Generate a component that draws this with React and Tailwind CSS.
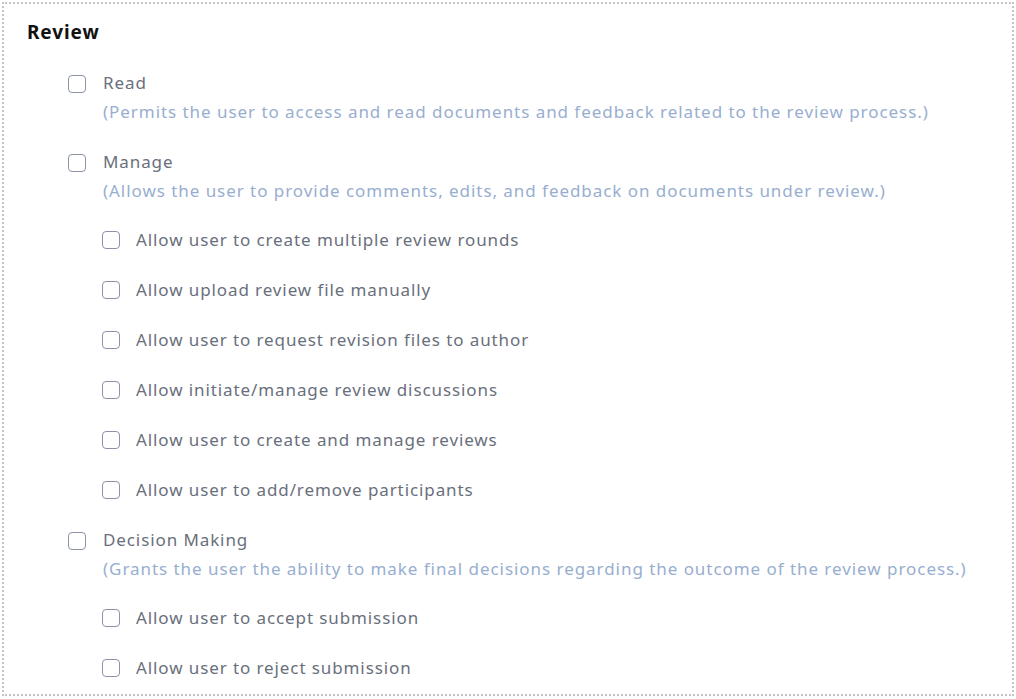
import React from "react";

const sections = [
  {
    label: "Read",
    desc: "(Permits the user to access and read documents and feedback related to the review process.)",
    children: [],
  },
  {
    label: "Manage",
    desc: "(Allows the user to provide comments, edits, and feedback on documents under review.)",
    children: [
      "Allow user to create multiple review rounds",
      "Allow upload review file manually",
      "Allow user to request revision files to author",
      "Allow initiate/manage review discussions",
      "Allow user to create and manage reviews",
      "Allow user to add/remove participants",
    ],
  },
  {
    label: "Decision Making",
    desc: "(Grants the user the ability to make final decisions regarding the outcome of the review process.)",
    children: ["Allow user to accept submission", "Allow user to reject submission"],
  },
];

function Box() {
  return (
    <input
      type="checkbox"
      className="h-[18px] w-[18px] shrink-0 appearance-none rounded-[4px] border-[1.5px] border-[#8c93a6] bg-white"
    />
  );
}

export default function App() {
  return (
    <div className="h-[699px] w-[1016px] bg-white p-[2px] font-['Noto_Sans',sans-serif]">
      <div className="h-[694px] border-2 border-dotted border-[#c4c4c4] pl-[23px] pt-[15px]">
        <h2 className="text-[19px] font-bold leading-[26px] tracking-[0.9px] text-[#111]">Review</h2>
        <div className="mt-[28px] flex flex-col gap-[30px] pl-[41px]">
          {sections.map((s) => (
            <div key={s.label}>
              <label className="flex items-start gap-[17px]">
                <div className="pt-[2px]">
                  <Box />
                </div>
                <div>
                  <div className="text-[17px] leading-[20px] tracking-[0.9px] text-[#6a6f7c]">{s.label}</div>
                  <div className="mt-[9px] text-[17px] leading-[20px] tracking-[0.95px] text-[#98aed0]">
                    {s.desc}
                  </div>
                </div>
              </label>
              {s.children.length > 0 && (
                <div className="mt-[29px] flex flex-col gap-[30px] pl-[34px]">
                  {s.children.map((c) => (
                    <label key={c} className="flex items-center gap-[16px]">
                      <Box />
                      <span className="text-[17px] leading-[20px] tracking-[0.9px] text-[#6a6f7c]">{c}</span>
                    </label>
                  ))}
                </div>
              )}
            </div>
          ))}
        </div>
      </div>
    </div>
  );
}
